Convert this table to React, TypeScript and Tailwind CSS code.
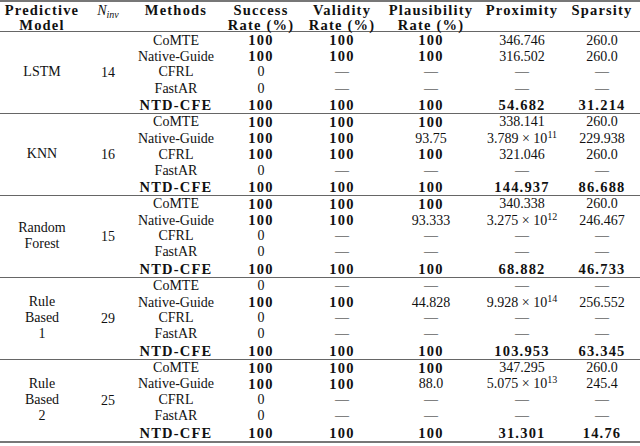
import React from 'react';

type Block = {
  model: string[];
  n: string;
  rows: string[][];
};

// "*" prefix = bold, "^" = scientific notation (mantissa^exponent)
const methods = ['CoMTE', 'Native-Guide', 'CFRL', 'FastAR', '*NTD-CFE'];

const blocks: Block[] = [
  {
    model: ['LSTM'],
    n: '14',
    rows: [
      ['*100', '*100', '*100', '346.746', '260.0'],
      ['*100', '*100', '*100', '316.502', '260.0'],
      ['0', '—', '—', '—', '—'],
      ['0', '—', '—', '—', '—'],
      ['*100', '*100', '*100', '*54.682', '*31.214'],
    ],
  },
  {
    model: ['KNN'],
    n: '16',
    rows: [
      ['*100', '*100', '*100', '338.141', '260.0'],
      ['*100', '*100', '93.75', '3.789^11', '229.938'],
      ['*100', '*100', '*100', '321.046', '260.0'],
      ['0', '—', '—', '—', '—'],
      ['*100', '*100', '*100', '*144.937', '*86.688'],
    ],
  },
  {
    model: ['Random', 'Forest'],
    n: '15',
    rows: [
      ['*100', '*100', '*100', '340.338', '260.0'],
      ['*100', '*100', '93.333', '3.275^12', '246.467'],
      ['0', '—', '—', '—', '—'],
      ['0', '—', '—', '—', '—'],
      ['*100', '*100', '*100', '*68.882', '*46.733'],
    ],
  },
  {
    model: ['Rule', 'Based', '1'],
    n: '29',
    rows: [
      ['0', '—', '—', '—', '—'],
      ['*100', '*100', '44.828', '9.928^14', '256.552'],
      ['0', '—', '—', '—', '—'],
      ['0', '—', '—', '—', '—'],
      ['*100', '*100', '*100', '*103.953', '*63.345'],
    ],
  },
  {
    model: ['Rule', 'Based', '2'],
    n: '25',
    rows: [
      ['*100', '*100', '*100', '347.295', '260.0'],
      ['*100', '*100', '88.0', '5.075^13', '245.4'],
      ['0', '—', '—', '—', '—'],
      ['0', '—', '—', '—', '—'],
      ['*100', '*100', '*100', '*31.301', '*14.76'],
    ],
  },
];

function Bold({ children }: { children: React.ReactNode }) {
  return <span className="text-[14.5px] font-bold tracking-[1.2px]">{children}</span>;
}

function Value({ v }: { v: string }) {
  if (v.startsWith('*')) return <Bold>{v.slice(1)}</Bold>;
  if (v.includes('^')) {
    const [m, exp] = v.split('^');
    return (
      <span>
        {m} × 10<sup className="text-[10px]">{exp}</sup>
      </span>
    );
  }
  return <span>{v}</span>;
}

function HeaderCell({ lines, italic }: { lines?: string[]; italic?: boolean }) {
  return (
    <div className="flex flex-col items-center leading-[15px]">
      {italic ? (
        <span className="text-[14px]">
          <i>N</i>
          <sub className="text-[10px] italic">inv</sub>
        </span>
      ) : (
        lines?.map((l) => <Bold key={l}>{l}</Bold>)
      )}
    </div>
  );
}

export default function App() {
  return (
    <div className="w-[640px] h-[446px] bg-white text-[#111] font-['Liberation_Serif',serif] text-[14px] overflow-hidden">
      <div className="border-t-2 border-[#777] grid grid-cols-[84px_48px_88px_82px_80px_98px_84px_76px] h-[31px] pt-px">
        <HeaderCell lines={['Predictive', 'Model']} />
        <HeaderCell italic />
        <HeaderCell lines={['Methods']} />
        <HeaderCell lines={['Success', 'Rate (%)']} />
        <HeaderCell lines={['Validity', 'Rate (%)']} />
        <HeaderCell lines={['Plausibility', 'Rate (%)']} />
        <HeaderCell lines={['Proximity']} />
        <HeaderCell lines={['Sparsity']} />
      </div>

      {blocks.map((b, bi) => (
        <div
          key={bi}
          className={
            'flex border-t border-[#666] ' + (bi === blocks.length - 1 ? 'border-b-2 border-b-[#777]' : '')
          }
        >
          <div className="w-[84px] flex flex-col items-center justify-center leading-[16.2px]">
            {b.model.map((m) => (
              <span key={m}>{m}</span>
            ))}
          </div>
          <div className="w-[48px] flex items-center justify-center">{b.n}</div>
          <div className="flex flex-col">
            {b.rows.map((r, ri) => (
              <div
                key={ri}
                className="grid grid-cols-[88px_82px_80px_98px_84px_76px] h-[16.2px] items-center leading-[16.2px]"
              >
                <div className="text-center whitespace-nowrap">
                  <Value v={methods[ri]} />
                </div>
                {r.map((c, ci) => (
                  <div key={ci} className="text-center whitespace-nowrap">
                    <Value v={c} />
                  </div>
                ))}
              </div>
            ))}
          </div>
        </div>
      ))}
    </div>
  );
}
